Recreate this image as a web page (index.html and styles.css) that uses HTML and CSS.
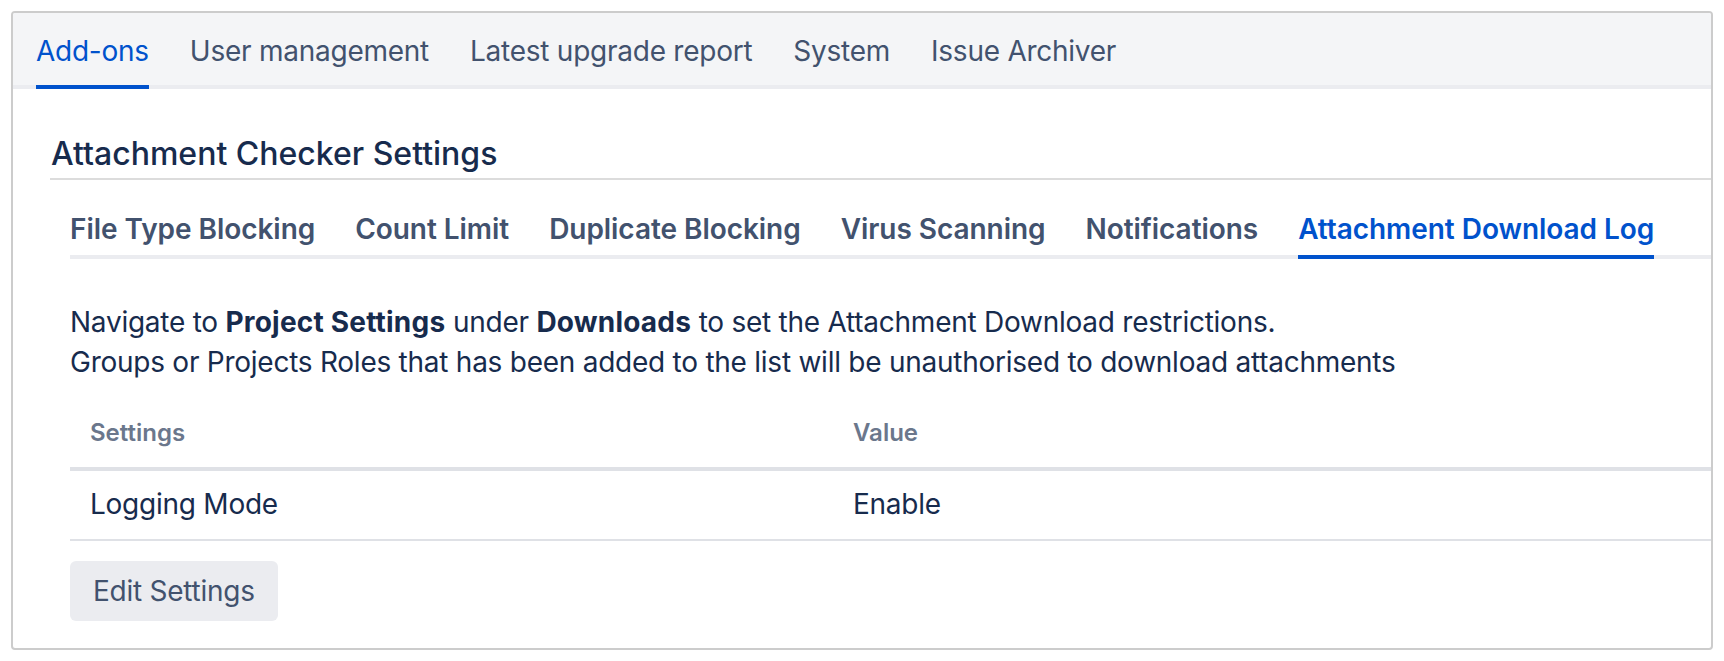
FILE: index.html
```html
<!DOCTYPE html>
<html lang="en">
<head>
<meta charset="utf-8">
<title>Attachment Checker Settings</title>
<link rel="stylesheet" href="styles.css">
</head>
<body>
<div class="panel">
  <nav class="topnav">
    <a class="topnav-item is-active">Add-ons</a>
    <a class="topnav-item">User management</a>
    <a class="topnav-item">Latest upgrade report</a>
    <a class="topnav-item">System</a>
    <a class="topnav-item">Issue Archiver</a>
  </nav>
  <div class="content">
    <h2 class="page-title">Attachment Checker Settings</h2>
    <div class="section">
      <nav class="subtabs">
        <a class="subtab">File Type Blocking</a>
        <a class="subtab">Count Limit</a>
        <a class="subtab">Duplicate Blocking</a>
        <a class="subtab">Virus Scanning</a>
        <a class="subtab">Notifications</a>
        <a class="subtab is-active">Attachment Download Log</a>
      </nav>
      <p class="intro">Navigate to <strong>Project Settings</strong> under <strong>Downloads</strong> to set the Attachment Download restrictions.<br>Groups or Projects Roles that has been added to the list will be unauthorised to download attachments</p>
      <table class="settings-table">
        <thead>
          <tr><th class="col-name">Settings</th><th>Value</th></tr>
        </thead>
        <tbody>
          <tr><td>Logging Mode</td><td>Enable</td></tr>
        </tbody>
      </table>
      <button class="btn" type="button">Edit Settings</button>
    </div>
  </div>
</div>
</body>
</html>
```

FILE: styles.css
```css
html, body {
  margin: 0;
  padding: 0;
  background: #ffffff;
}

body {
  font-family: "Inter", "Liberation Sans", sans-serif;
  color: #172b4d;
  letter-spacing: -0.25px;
}

.panel {
  box-sizing: border-box;
  width: 1702px;
  height: 639px;
  margin: 11px 0 0 11px;
  border: 2px solid #cccccc;
  border-radius: 4px;
  overflow: hidden;
  display: flex;
  flex-direction: column;
}

.topnav {
  display: flex;
  gap: 41px;
  padding: 18px 0 0 23px;
  background: #f4f5f7;
  border-bottom: 4px solid #ebecf0;
}

.topnav-item {
  font-size: 28px;
  line-height: 40px;
  color: #42526e;
  padding-bottom: 14px;
  margin-bottom: -4px;
  border-bottom: 4px solid transparent;
}

.topnav-item.is-active {
  color: #0052cc;
  border-bottom-color: #0052cc;
}

.content {
  padding: 0 0 27px 37px;
}

.page-title {
  margin: 45px 0 0 0;
  padding: 0 0 4px 1px;
  font-size: 32px;
  line-height: 40px;
  font-weight: 500;
  letter-spacing: 0;
  color: #172b4d;
  border-bottom: 2px solid #dcdcdc;
}

.section {
  padding-left: 20px;
}

.subtabs {
  display: flex;
  gap: 40px;
  margin-top: 29px;
  border-bottom: 4px solid #ebecf0;
}

.subtab {
  font-size: 28px;
  line-height: 40px;
  font-weight: 600;
  letter-spacing: -0.05px;
  color: #42526e;
  padding-bottom: 6px;
  margin-bottom: -4px;
  border-bottom: 4px solid transparent;
}

.subtab.is-active {
  color: #0052cc;
  border-bottom-color: #0052cc;
}

.intro {
  margin: 43px 0 0 0;
  font-size: 28px;
  line-height: 40px;
  color: #172b4d;
}

.intro strong {
  font-weight: 700;
  letter-spacing: 0.2px;
}

.settings-table {
  width: 100%;
  margin-top: 20px;
  border-collapse: collapse;
}

.settings-table th {
  text-align: left;
  font-size: 24px;
  line-height: 34px;
  font-weight: 600;
  letter-spacing: 0;
  color: #6b778c;
  padding: 14px 20px 17px 20px;
  border-bottom: 4px solid #dfe1e6;
}

.settings-table th.col-name {
  width: 723px;
}

.settings-table td {
  font-size: 28px;
  line-height: 40px;
  color: #172b4d;
  padding: 13px 20px 15px 20px;
  border-bottom: 2px solid #dfe1e6;
}

.btn {
  margin-top: 20px;
  padding: 10px 23px;
  border: 0;
  border-radius: 6px;
  background: #ebecf0;
  font-family: inherit;
  font-size: 28px;
  line-height: 40px;
  letter-spacing: -0.25px;
  color: #42526e;
}
```
